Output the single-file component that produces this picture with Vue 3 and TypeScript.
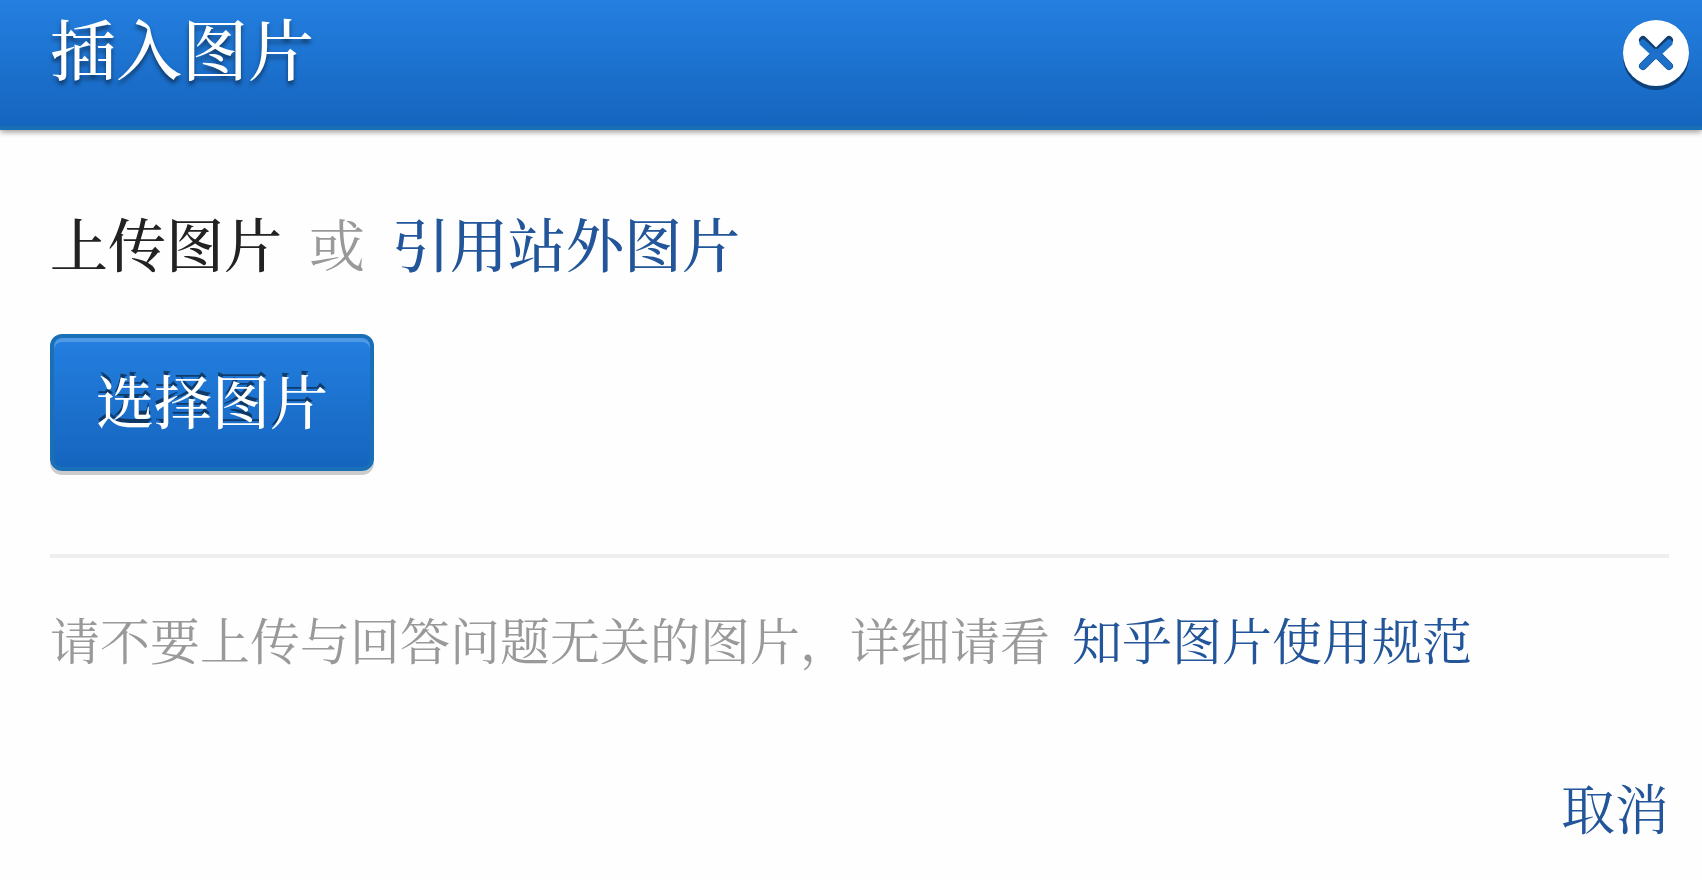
<script setup lang="ts">
import { ref } from 'vue'

const open = ref<boolean>(true)
const picker = ref<HTMLInputElement | null>(null)

function close(): void {
  open.value = false
}

function chooseImage(): void {
  picker.value?.click()
}
</script>

<template>
  <section v-if="open" class="dialog" role="dialog" aria-labelledby="dialog-title">
    <header class="header">
      <h1 id="dialog-title" class="title">插入图片</h1>
      <button class="close" type="button" aria-label="关闭" @click="close">
        <svg class="close-icon" viewBox="0 0 68 72" aria-hidden="true">
          <circle cx="34" cy="37" r="33" fill="#0d427c" />
          <circle cx="34" cy="33" r="33" fill="#fff" />
          <path d="M21 20 47 46M47 20 21 46" stroke="#123f70" stroke-width="8" stroke-linecap="round" />
          <path d="M21 23 34 35 47 23M21 46 34 33 47 46" fill="none" stroke="#1d70c9" stroke-width="7" stroke-linecap="round" />
        </svg>
      </button>
    </header>

    <div class="body">
      <div class="modes">
        <strong class="current">上传图片</strong>
        <span class="or">或</span>
        <a class="external" href="#external">引用站外图片</a>
      </div>

      <button class="choose" type="button" @click="chooseImage">选择图片</button>
      <input ref="picker" type="file" accept="image/*" aria-label="选择图片" hidden />

      <p class="note">
        <span>请不要上传与回答问题无关的图片，详细请看</span>
        <a href="#rules">知乎图片使用规范</a>
      </p>

      <footer class="footer">
        <button class="cancel" type="button" @click="close">取消</button>
      </footer>
    </div>
  </section>
</template>

<style>
body {
  margin: 0;
  background: #fefefe;
}
</style>

<style scoped>
.dialog {
  font-family: "Noto Serif CJK SC", "Songti SC", "Noto Sans CJK SC", serif;
  color: #999;
}

.header {
  display: flex;
  justify-content: space-between;
  align-items: flex-start;
  box-sizing: border-box;
  height: 130px;
  padding: 0 12px 0 50px;
  background: linear-gradient(#247fe0, #1565be);
  border-bottom: 4px solid #1a70b4;
  box-shadow: 0 2px 6px rgba(0, 0, 0, 0.4);
}

.title {
  margin: 0;
  font-size: 66px;
  font-weight: 500;
  line-height: 94px;
  color: #fff;
  text-shadow: 0 4px 4px rgba(0, 0, 0, 0.5);
}

.close {
  margin: 20px 0 0;
  padding: 0;
  border: 0;
  background: none;
  cursor: pointer;
}

.close-icon {
  display: block;
  width: 68px;
  height: 72px;
}

.body {
  padding: 72px 33px 0 50px;
}

.modes {
  display: flex;
  align-items: center;
  gap: 27px;
  font-size: 58px;
  line-height: 80px;
}

.current,
.external {
  font-weight: 500;
}

.current {
  color: #222;
}

.or {
  font-size: 56px;
}

a {
  color: #225599;
  text-decoration: none;
}

.choose {
  display: block;
  box-sizing: border-box;
  height: 137px;
  margin: 52px 0 83px;
  padding: 0 42px 8px;
  border: 4px solid #1a70b6;
  border-radius: 12px;
  background: linear-gradient(#247fe0, #1565be);
  box-shadow: inset 0 4px 0 #4f98e6, 0 4px 0 #ccc;
  font: inherit;
  font-size: 58px;
  font-weight: 500;
  line-height: 80px;
  color: #fff;
  text-shadow: 0 -4px 0 rgba(0, 0, 0, 0.5);
  cursor: pointer;
}

.note {
  display: flex;
  gap: 22px;
  margin: 0;
  padding-top: 40px;
  border-top: 4px solid #eee;
  font-size: 50px;
  line-height: 80px;
}

.footer {
  display: flex;
  justify-content: flex-end;
  margin-top: 89px;
}

.cancel {
  padding: 0;
  border: 0;
  background: none;
  font: inherit;
  font-size: 54px;
  line-height: 80px;
  color: #225599;
  cursor: pointer;
}
</style>
